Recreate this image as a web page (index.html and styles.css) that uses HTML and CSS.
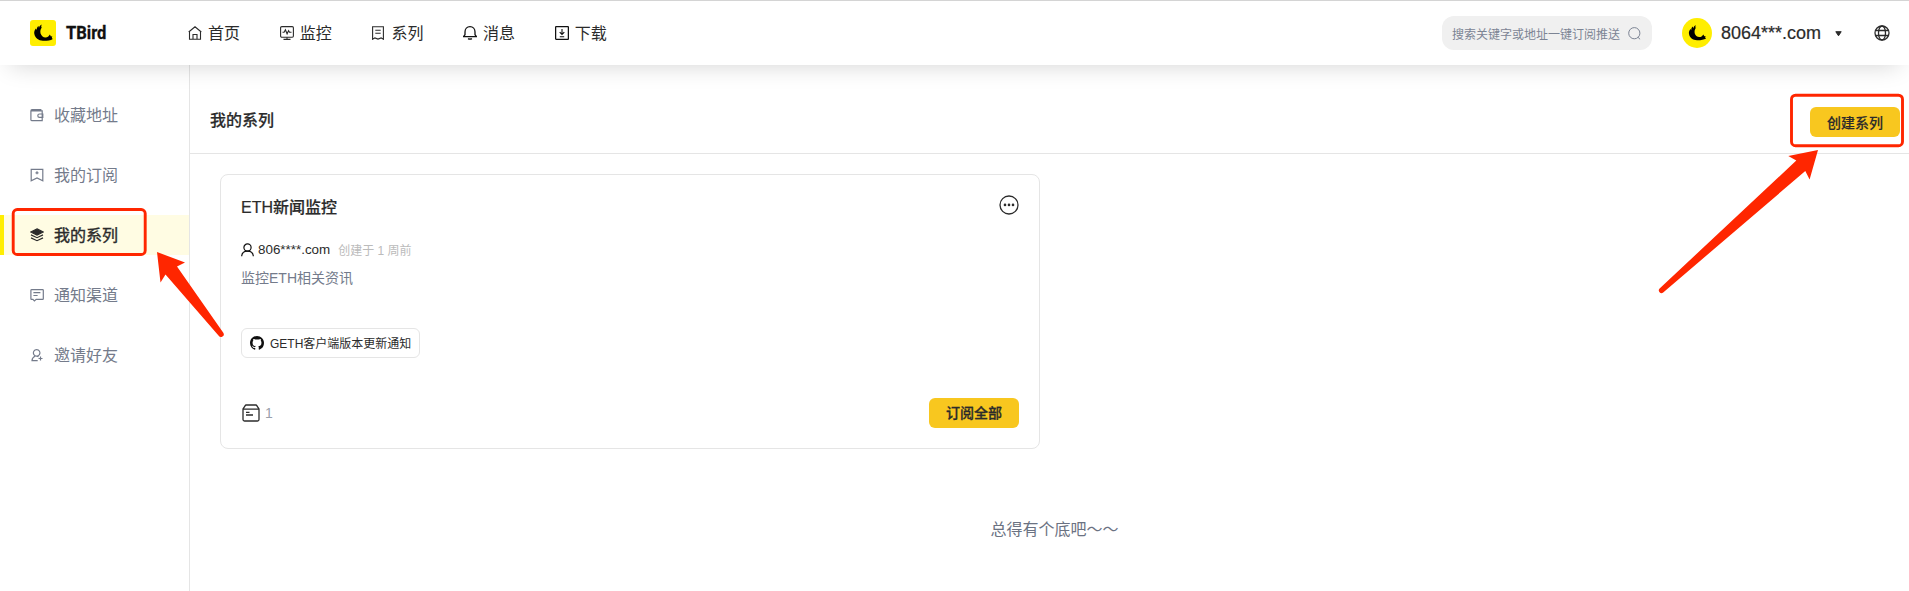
FILE: index.html
```html
<!DOCTYPE html>
<html lang="zh-CN">
<head>
<meta charset="utf-8">
<title>TBird</title>
<link rel="stylesheet" href="styles.css">
</head>
<body>
<svg class="defs" aria-hidden="true">
  <symbol id="bird" viewBox="0 0 26 26">
    <path d="M11.700 4.600C10 5.400 9.300 6.400 9 8L8.500 6C7.200 7 6.700 8.200 6.800 10L5.900 8.600C4.500 10.400 4 12 4.300 13.800 4.900 18 8.500 20.700 13 20.800c3.800.1 7.500-.4 9.800-1.900L21.800 17.900 22.300 16.300 20.900 16.600 19.900 14.600 18.300 16.400C16.500 17.900 14 17.700 12.300 16.200 10.600 14.500 10 12.500 10.500 10L12.200 6.300 10.900 7.500z"/>
  </symbol>
</svg>
<header class="header">
  <a class="brand">
    <svg class="brand-logo"><use href="#bird"/></svg>
    <span class="brand-name">TBird</span>
  </a>
  <nav class="nav">
    <a class="nav-item"><svg class="icon" viewBox="0 0 14 14"><path d="M.7 6 7 .8 13.300 6M1.500 5.400v7.900h11V5.400M5 13.300V8.500h4v4.800"/></svg><span>首页</span></a>
    <a class="nav-item"><svg class="icon" viewBox="0 0 14 14"><rect x=".6" y=".6" width="12.800" height="10.600" rx="1.200"/><path d="M2.500 6.200h1.600l1.300-2.400 1.700 4 1.500-3.200.9 1.600h2M3.500 13.400h7M7 11.200v2"/></svg><span>监控</span></a>
    <a class="nav-item"><svg class="icon" viewBox="0 0 14 14"><path d="M1.600.7h10.800v12.600l-2.300-1.400-3.100 1.200-3.100-1.200-2.300 1.400zM4.300 4.200h5.400M4.300 7.200h5.400"/></svg><span>系列</span></a>
    <a class="nav-item"><svg class="icon bell" viewBox="0 0 14 14"><path d="M.5 10.600h13L12 8.700V6C12 3 10 .7 7 .7S2 3 2 6v2.700zM5.200 12.500c.7.900 2.900.9 3.600 0"/></svg><span>消息</span></a>
    <a class="nav-item"><svg class="icon bell" viewBox="0 0 14 14"><rect x=".6" y=".7" width="12.800" height="12.600" rx=".6"/><path class="thin" d="M7 3v5.300M4.700 6.200 7 8.500l2.300-2.300M4.800 10.700h4.400"/></svg><span>下载</span></a>
  </nav>
  <div class="search"><span>搜索关键字或地址一键订阅推送</span><svg class="search-icon" viewBox="0 0 13 13"><circle cx="6.300" cy="6.200" r="5.600"/><path d="m9.900 10.200 2.200 2.100"/></svg></div>
  <div class="account">
    <span class="avatar"><svg class="avatar-bird"><use href="#bird"/></svg></span>
    <span class="account-name">8064***.com</span>
    <svg class="caret" viewBox="0 0 7 6"><path d="M.8.700h5.400L3.500 4.800z"/></svg>
  </div>
  <svg class="globe" viewBox="0 0 16 16"><circle cx="8" cy="8" r="7"/><ellipse cx="8" cy="8" rx="3.500" ry="7"/><path d="M1.500 5.500h13M1.500 10.500h13"/></svg>
</header>
<div class="body">
  <aside class="sidebar">
    <a class="side-item"><svg class="side-icon" viewBox="0 0 14 14"><path d="M1.500 2.900h10.700v9.700H1.700q-.8 0-.8-.8V3q0-1.300 1.100-1.300h8.800v1.200M12.800 6H9.500a1.700 1.700 0 0 0 0 3.400h3.300z"/></svg><span>收藏地址</span></a>
    <a class="side-item"><svg class="side-icon" viewBox="0 0 14 14"><path d="M1.200 1.300h11.600v11.500L7 9.900l-5.800 2.900zM7 3.300v3M5.500 4.800h3"/></svg><span>我的订阅</span></a>
    <a class="side-item active"><svg class="side-icon layers" viewBox="0 0 14 14"><path class="fill" d="M7 .9 13.300 4 7 7.100.7 4z"/><path d="M1 6.900 7 9.700l6-2.800M1 9.900l6 2.800 6-2.800"/></svg><span>我的系列</span></a>
    <a class="side-item"><svg class="side-icon" viewBox="0 0 14 14"><path d="M1.800 1.600h10.800q.7 0 .7.700v8.400q0 .7-.7.700H6.200L4.400 13 2.900 11.400H1.600q-.7 0-.7-.7V2.300q0-.7.900-.7zM3.400 4.700h7M3.400 7.500h4.200"/></svg><span>通知渠道</span></a>
    <a class="side-item"><svg class="side-icon" viewBox="0 0 14 14"><path d="M7.700 12.700H2c0-2.500 1.300-3.800 3.300-4.700M6.600 8.200a3.300 3.300 0 1 1 .1 0l1.800.6M10.500 8.500v4M8.500 10.500h4"/></svg><span>邀请好友</span></a>
  </aside>
  <main class="main">
    <div class="page-head"><h1 class="page-title">我的系列</h1><button class="btn create">创建系列</button></div>
    <section class="card">
      <div class="card-head">
        <h2 class="card-title">ETH新闻监控</h2>
        <svg class="more" viewBox="0 0 20 20"><circle cx="10" cy="10" r="9" class="ring"/><circle cx="6" cy="9.900" r="1.300"/><circle cx="10" cy="9.900" r="1.300"/><circle cx="14" cy="9.900" r="1.300"/></svg>
      </div>
      <div class="meta">
        <svg class="user-icon" viewBox="0 0 13 14"><circle cx="6.500" cy="4.500" r="3.600"/><path d="M.7 13.200C.9 9.700 3.300 8.100 6.500 8.100s5.600 1.600 5.800 5.100"/></svg>
        <span class="owner">806****.com</span>
        <span class="time">创建于 1 周前</span>
      </div>
      <p class="desc">监控ETH相关资讯</p>
      <div class="tag">
        <svg class="github" viewBox="0 0 16 16"><path d="M8 0C3.580 0 0 3.580 0 8c0 3.540 2.290 6.530 5.470 7.590.4.070.55-.17.55-.38 0-.19-.01-.82-.01-1.490-2.010.37-2.530-.49-2.690-.94-.09-.23-.48-.94-.82-1.130-.28-.15-.68-.52-.01-.53.63-.01 1.080.58 1.230.82.72 1.210 1.870.87 2.330.66.070-.52.28-.87.51-1.070-1.780-.2-3.640-.89-3.640-3.950 0-.87.31-1.590.82-2.150-.08-.2-.36-1.020.08-2.120 0 0 .67-.21 2.200.82.64-.18 1.320-.27 2-.27s1.360.09 2 .27c1.530-1.040 2.200-.82 2.200-.82.44 1.100.16 1.920.08 2.120.51.56.82 1.270.82 2.150 0 3.070-1.870 3.750-3.650 3.950.29.25.54.73.54 1.480 0 1.070-.01 1.930-.01 2.200 0 .21.15.46.55.38A8.010 8.010 0 0 0 16 8c0-4.420-3.580-8-8-8z"/></svg>
        <span>GETH客户端版本更新通知</span>
      </div>
      <div class="card-foot">
        <span class="count"><svg class="box" viewBox="0 0 18 18"><path d="M1 5v10.500q0 1.500 1.500 1.500h13q1.500 0 1.500-1.500V5L14.800 1.700q-.2-.7-1-.7H4.200q-.8 0-1 .7zM1 5.200h16M4 8.300h3.500M4 11h7"/></svg>1</span>
        <button class="btn subscribe">订阅全部</button>
      </div>
    </section>
    <p class="end">总得有个底吧～～</p>
  </main>
</div>
<svg class="marks" viewBox="0 0 1909 591">
  <rect x="13.200" y="209.500" width="132" height="45" rx="4"/>
  <rect x="1791.500" y="95.200" width="111" height="50.500" rx="4"/>
  <path d="M157 252 185 262.500 177 266.500 223.300 332.700A2.700 2.700 0 0 1 218.700 335.700L165.500 274.500 160.500 282.500z"/>
  <path d="M1818 150 1788.300 156 1796.300 160.500 1659.600 288.500A2.700 2.700 0 0 0 1663.200 292.500L1805.300 171 1809.600 179.500z"/>
</svg>
</body>
</html>
```
FILE: styles.css
```css
* { box-sizing: border-box; }
body {
  margin: 0;
  height: 591px;
  overflow: hidden;
  position: relative;
  display: flex;
  flex-direction: column;
  background: #fff;
  color: #2b2b2b;
  font-family: "Liberation Sans", "Noto Sans CJK SC", sans-serif;
  font-size: 16px;
}
h1, h2, p { margin: 0; }
svg { flex: none; fill: none; stroke: currentColor; }
.defs { position: absolute; width: 0; height: 0; }

.header {
  position: relative;
  z-index: 1;
  flex: none;
  display: flex;
  align-items: center;
  height: 65px;
  padding: 0 19px 0 30px;
  border-top: 1px solid #d4d4d4;
  background: #fff;
  box-shadow: 0 10px 24px -10px rgba(0, 0, 0, .18);
}
.brand { display: flex; align-items: center; gap: 10px; width: 158px; }
.brand-logo { width: 26px; height: 26px; border-radius: 3px; background: #fe0; fill: #000; stroke: none; }
.brand-name {
  font: bold 18px/26px Roboto, sans-serif;
  color: #111;
  transform: scaleX(.92);
  transform-origin: left;
  -webkit-text-stroke: .3px;
}
.nav { display: flex; gap: 39.700px; }
.nav-item { display: flex; align-items: center; gap: 6px; line-height: 24px; }
.nav-item span { padding-top: 1px; }
.icon { width: 14px; height: 14px; stroke-width: 1.100; }
.bell { stroke-width: 1.300; color: #111; }
.thin { stroke-width: 1.100; }
.search {
  display: flex;
  align-items: center;
  justify-content: space-between;
  width: 210px;
  height: 34px;
  margin-left: auto;
  padding: 0 11px 0 10px;
  border-radius: 12px;
  background: #f0f0f0;
  color: #7c8494;
  font-size: 12px;
}
.search-icon { width: 13px; height: 13px; }
.account { display: flex; align-items: center; margin-left: 30px; }
.avatar { display: flex; width: 30px; height: 30px; padding: 3px; border-radius: 50%; background: #fe0; }
.avatar-bird { width: 24px; height: 24px; overflow: visible; fill: #000; stroke: none; }
.account-name { margin-left: 9px; font-size: 18px; line-height: 24px; white-space: nowrap; -webkit-text-stroke: .2px; }
.caret { width: 7px; height: 6px; margin: 1px 0 0 14px; fill: currentColor; stroke-linejoin: round; }
.globe { width: 16px; height: 16px; margin-left: 32px; stroke-width: 1.300; }

.body { flex: 1; display: flex; }
.sidebar {
  display: flex;
  flex-direction: column;
  gap: 20px;
  width: 190px;
  padding-top: 30px;
  border-right: 1px solid #e5e5e5;
}
.side-item {
  display: flex;
  align-items: center;
  gap: 10px;
  height: 40px;
  padding-left: 26px;
  border-left: 4px solid transparent;
  color: #747b8b;
}
.side-item span { padding-bottom: 2px; }
.side-item.active { border-left-color: #fe0; background: #fffce3; color: #2b2b2b; }
.side-item.active span { -webkit-text-stroke: .4px; }
.side-icon { width: 14px; height: 14px; stroke-width: 1.200; }
.layers .fill { fill: currentColor; }

.main { flex: 1; display: flex; flex-direction: column; }
.page-head {
  display: flex;
  align-items: center;
  justify-content: space-between;
  height: 89px;
  padding: 24px 9px 0 20px;
  border-bottom: 1px solid #e5e5e5;
}
.page-title, .card-title { font-size: 16px; line-height: 24px; font-weight: 500; -webkit-text-stroke: .2px; }
.card-title { padding-top: 1px; }
.btn {
  width: 90px;
  height: 30px;
  padding: 0;
  border: 0;
  border-radius: 6px;
  background: #f8c71f;
  color: #2b2b2b;
  font: 500 14px "Liberation Sans", "Noto Sans CJK SC", sans-serif;
  -webkit-text-stroke: .15px;
}
.create { margin-top: 2px; padding-bottom: 1px; }
.subscribe { padding-bottom: 2px; -webkit-text-stroke: .3px; }
.card {
  display: flex;
  flex-direction: column;
  align-items: flex-start;
  width: 820px;
  height: 275px;
  margin: 20px 0 0 30px;
  padding: 20px;
  border: 1px solid #e5e5e5;
  border-radius: 8px;
}
.card-head, .card-foot { display: flex; align-items: center; justify-content: space-between; width: 100%; }
.more { width: 20px; height: 20px; margin-top: -5px; fill: currentColor; stroke: none; }
.more .ring { fill: none; stroke: currentColor; stroke-width: 1.300; }
.meta { display: flex; align-items: center; height: 20px; margin-top: 20px; }
.user-icon { width: 13px; height: 14px; color: #111; stroke-width: 1.200; }
.owner { margin-left: 4px; padding-bottom: 2px; font-size: 13.400px; }
.time { margin-left: 8px; padding-bottom: 2px; font-size: 12px; color: #bbb; }
.desc { margin-top: 8px; font-size: 14px; line-height: 20px; color: #747b8b; }
.tag {
  display: flex;
  align-items: center;
  gap: 6px;
  height: 30px;
  margin-top: 40px;
  padding: 0 8px;
  border: 1px solid #e5e5e5;
  border-radius: 6px;
  font-size: 12px;
}
.tag span { padding-bottom: 2px; }
.github { width: 14px; height: 14px; fill: #111; stroke: none; }
.card-foot { margin-top: auto; }
.count { display: flex; align-items: center; gap: 5px; padding-left: 1px; font-size: 14px; color: #9a9fab; }
.box { width: 18px; height: 18px; color: #2b2b2b; stroke-width: 1.300; }
.end { margin: 69px 0 0 10px; line-height: 24px; text-align: center; color: #6b7282; }

.marks { position: absolute; z-index: 2; inset: 0; width: 1909px; height: 591px; pointer-events: none; }
.marks rect { stroke: #ff2600; stroke-width: 2.900; }
.marks path { fill: #ff2600; stroke: none; }
```
